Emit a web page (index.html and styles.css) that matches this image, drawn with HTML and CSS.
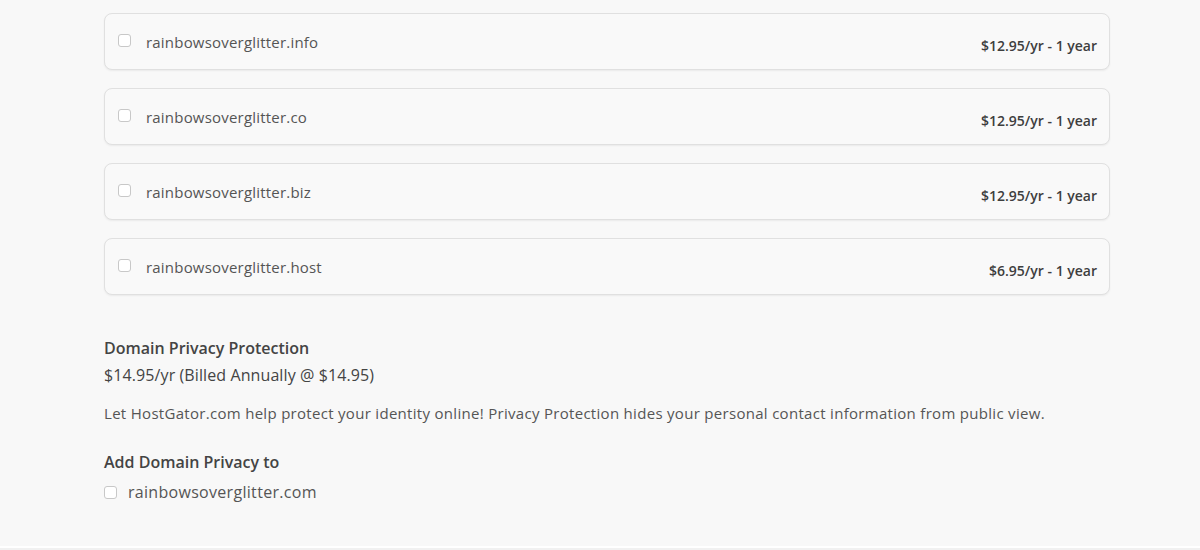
FILE: index.html
```html
<!DOCTYPE html>
<html>
<head>
  <title>Domain Add-ons</title>
  <link rel="stylesheet" href="styles.css">
</head>
<body>
  <div class="page">
    <div class="addons">

      <div class="domain-card">
        <label class="domain-name"><input type="checkbox"> rainbowsoverglitter.info</label>
        <span class="price">$12.95/yr - 1 year</span>
      </div>

      <div class="domain-card">
        <label class="domain-name"><input type="checkbox"> rainbowsoverglitter.co</label>
        <span class="price">$12.95/yr - 1 year</span>
      </div>

      <div class="domain-card">
        <label class="domain-name"><input type="checkbox"> rainbowsoverglitter.biz</label>
        <span class="price">$12.95/yr - 1 year</span>
      </div>

      <div class="domain-card">
        <label class="domain-name"><input type="checkbox"> rainbowsoverglitter.host</label>
        <span class="price">$6.95/yr - 1 year</span>
      </div>

      <div class="privacy">
        <h4>Domain Privacy Protection</h4>
        <div class="privacy-price">$14.95/yr (Billed Annually @ $14.95)</div>
        <p>Let HostGator.com help protect your identity online! Privacy Protection hides your personal contact information from public view.</p>

        <h4 class="add-to">Add Domain Privacy to</h4>
        <label class="privacy-domain"><input type="checkbox"> rainbowsoverglitter.com</label>
      </div>

    </div>
  </div>
  <div class="page-end"></div>
</body>
</html>
```

FILE: styles.css
```css
body {
  margin: 0;
  background-color: #fff;
  font-family: "Open Sans", "Liberation Sans", sans-serif;
  color: #4a4a4a;
}

.page {
  background-color: #f8f8f8;
  height: 546px;
  overflow: hidden;
}

.page-end {
  margin-top: 2px;
  height: 2px;
  background-color: #f1f1f1;
}

.addons {
  width: 1006px;
  margin-left: 104px;
  padding-top: 13px;
}

.domain-card {
  display: flex;
  justify-content: space-between;
  align-items: flex-start;
  box-sizing: border-box;
  height: 57px;
  margin-bottom: 18px;
  padding: 18px 12px 0 13px;
  border: 1px solid #e0e0e0;
  border-radius: 8px;
  background-color: #f9f9f9;
  box-shadow: 0 1px 2px rgba(0, 0, 0, 0.06);
}

.domain-name {
  display: flex;
  align-items: center;
  line-height: 20px;
  font-size: 15px;
  letter-spacing: 0.2px;
  color: #555;
}

input[type="checkbox"] {
  appearance: none;
  width: 13px;
  height: 13px;
  margin: 0 15px 0 0;
  border: 1px solid #c8c8c8;
  border-radius: 3px;
  background-color: #fff;
  position: relative;
  top: -2px;
}

.price {
  margin-top: 4px;
  line-height: 20px;
  font-size: 14px;
  font-weight: 600;
  color: #3e3e3e;
}

.privacy {
  padding-top: 23px;
}

.privacy h4 {
  margin: 0 0 3px 0;
  font-size: 16px;
  font-weight: 600;
  line-height: 24px;
  color: #444;
}

.privacy-price {
  font-size: 16px;
  line-height: 24px;
  letter-spacing: 0.1px;
  color: #444;
}

.privacy p {
  margin: 14px 0 0 0;
  font-size: 15px;
  line-height: 24px;
  letter-spacing: 0.3px;
  color: #555;
}

.privacy .add-to {
  margin-top: 25px;
}

.privacy-domain {
  display: flex;
  align-items: center;
  margin-top: 6px;
  font-size: 16px;
  line-height: 24px;
  letter-spacing: 0.3px;
  color: #555;
}

.privacy-domain input[type="checkbox"] {
  margin-right: 11px;
  top: 0;
}
```
